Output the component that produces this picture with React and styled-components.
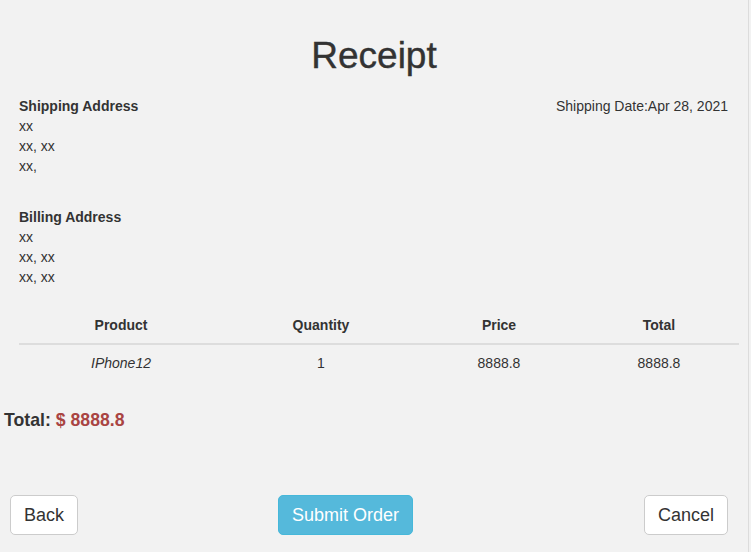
import React from 'react';
import styled, { createGlobalStyle } from 'styled-components';

const GlobalStyle = createGlobalStyle`
  html, body {
    margin: 0;
    padding: 0;
    background: #f2f2f2;
  }
  body {
    font-family: "Liberation Sans", Arial, Helvetica, sans-serif;
    font-size: 14px;
    line-height: 20px;
    color: #333;
  }
`;

const Page = styled.div`
  width: 749px;
  height: 552px;
  padding-top: 36px;
  border-right: 1px solid #dcdcdc;
  box-sizing: border-box;
  overflow: hidden;
`;

const Title = styled.h1`
  margin: 0 0 20px;
  font-size: 37px;
  line-height: 40px;
  font-weight: 500;
  text-align: center;
  color: #333;
  -webkit-text-stroke: 0.4px #333;
`;

const Info = styled.div`
  display: flex;
  justify-content: space-between;
  align-items: flex-start;
  padding: 0 20px 0 19px;
`;

const Addresses = styled.div`
  display: flex;
  flex-direction: column;
  gap: 31px;
`;

const AddressBlock = styled.div`
  display: flex;
  flex-direction: column;
`;

const Label = styled.strong`
  font-weight: bold;
`;

const ShipDate = styled.div`
  text-align: right;
`;

const Table = styled.div`
  margin: 20px 0 0 19px;
  width: 720px;
`;

const Row = styled.div`
  display: grid;
  grid-template-columns: 204px 196px 160px 160px;
  border-bottom: ${(p) => (p.$head ? '2px solid #dddddd' : 'none')};
`;

const Cell = styled.div`
  padding: 8px;
  text-align: center;
  font-weight: ${(p) => (p.$head ? 'bold' : 'normal')};
  font-style: ${(p) => (p.$italic ? 'italic' : 'normal')};
`;

const TotalLine = styled.div`
  margin: 29px 0 0 4px;
  font-size: 17.7px;
  line-height: 20px;
  font-weight: bold;
  color: #333;
`;

const Amount = styled.span`
  color: #a94442;
`;

const Actions = styled.div`
  display: grid;
  grid-template-columns: 268px auto 1fr;
  align-items: center;
  margin: 65px 20px 0 10px;
`;

const Button = styled.button`
  font-family: "Liberation Sans", Arial, Helvetica, sans-serif;
  font-size: 18px;
  line-height: 26px;
  padding: 6px 13px;
  border-radius: 5px;
  border: 1px solid ${(p) => (p.$primary ? '#46b8da' : '#cccccc')};
  background: ${(p) => (p.$primary ? '#55b9db' : '#ffffff')};
  color: ${(p) => (p.$primary ? '#ffffff' : '#333333')};
  cursor: pointer;
  justify-self: ${(p) => p.$align || 'start'};
`;

const items = [{ name: 'IPhone12', qty: 1, price: '8888.8', total: '8888.8' }];

export default function App() {
  return (
    <Page>
      <GlobalStyle />
      <Title>Receipt</Title>
      <Info>
        <Addresses>
          <AddressBlock>
            <Label>Shipping Address</Label>
            <span>xx</span>
            <span>xx, xx</span>
            <span>xx,</span>
          </AddressBlock>
          <AddressBlock>
            <Label>Billing Address</Label>
            <span>xx</span>
            <span>xx, xx</span>
            <span>xx, xx</span>
          </AddressBlock>
        </Addresses>
        <ShipDate>Shipping Date:Apr 28, 2021</ShipDate>
      </Info>
      <Table>
        <Row $head>
          <Cell $head>Product</Cell>
          <Cell $head>Quantity</Cell>
          <Cell $head>Price</Cell>
          <Cell $head>Total</Cell>
        </Row>
        {items.map((it) => (
          <Row key={it.name}>
            <Cell $italic>{it.name}</Cell>
            <Cell>{it.qty}</Cell>
            <Cell>{it.price}</Cell>
            <Cell>{it.total}</Cell>
          </Row>
        ))}
      </Table>
      <TotalLine>
        Total: <Amount>$ 8888.8</Amount>
      </TotalLine>
      <Actions>
        <Button>Back</Button>
        <Button $primary>Submit Order</Button>
        <Button $align="end">Cancel</Button>
      </Actions>
    </Page>
  );
}
